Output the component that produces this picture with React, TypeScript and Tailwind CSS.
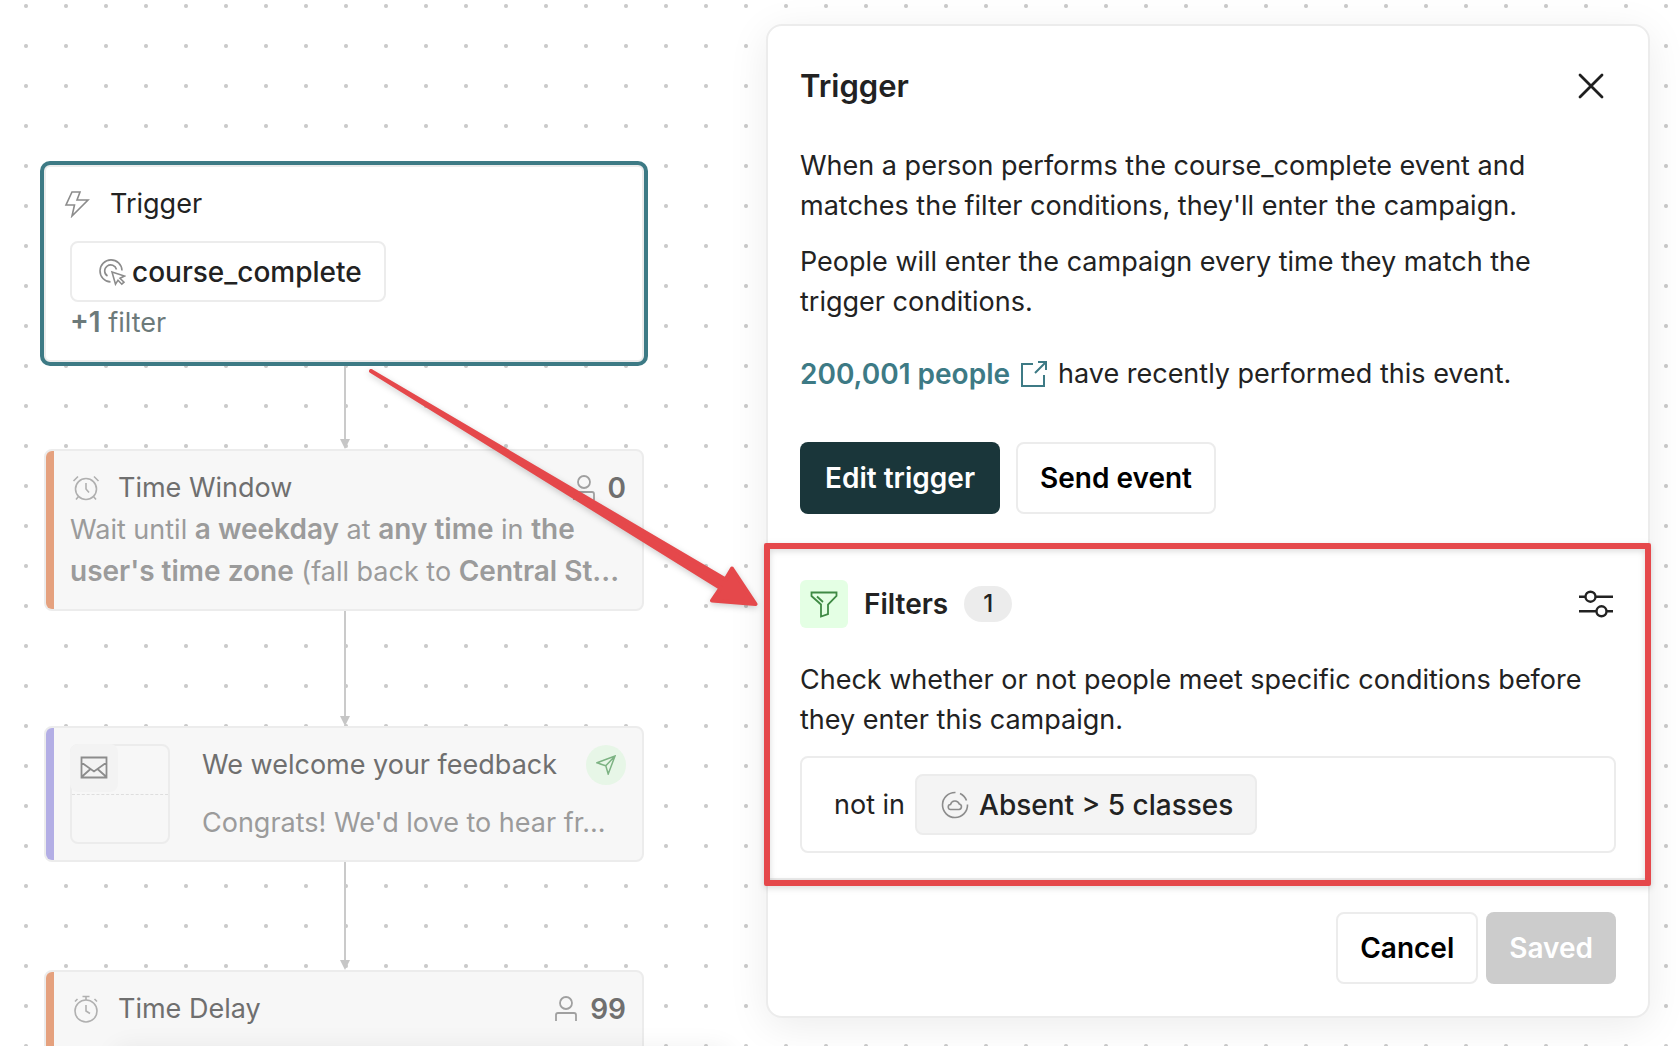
import type { ReactNode } from "react";

function BoltIcon() {
  return (
    <svg width="26" height="28" viewBox="0 0 26 28" fill="none" stroke="#8c8c8c" strokeWidth="1.6">
      <path d="M8 2h8l-3 8h11L8 26l2.500-11H2z" />
    </svg>
  );
}

function EventIcon() {
  return (
    <svg width="28" height="28" viewBox="0 0 28 28" fill="none" stroke="#8c8c8c" strokeWidth="1.6">
      <path d="M12.500 23.900A11 11 0 1 1 24 12.500" />
      <path d="M9.500 18A6 6 0 1 1 18.500 11.500" />
      <path d="M14 14l12.500 4-4.500 2.200 4 4-2.200 2-3.800-4-2.500 4z" />
    </svg>
  );
}

function AlarmIcon() {
  return (
    <svg width="28" height="28" viewBox="0 0 28 28" fill="none" stroke="#b0b0b0" strokeWidth="1.6">
      <circle cx="14" cy="15" r="10.500" />
      <path d="M14 9v6l3 3.500M1.500 7 6 2.500M22 2.500 26.500 7M6.500 22.500 4 25.500M21.500 22.500l2.500 3" />
    </svg>
  );
}

function StopwatchIcon() {
  return (
    <svg width="28" height="28" viewBox="0 0 28 28" fill="none" stroke="#b0b0b0" strokeWidth="1.6">
      <circle cx="14" cy="16" r="11" />
      <path d="M14 10v6l4 2.500M10.500 1.500h7M14 1.500V5M3 6.500 5.500 4M25 6.500 22.500 4" />
    </svg>
  );
}

function PersonIcon() {
  return (
    <svg width="24" height="26" viewBox="0 0 24 26" fill="none" stroke="#a0a0a0" strokeWidth="1.8">
      <circle cx="12" cy="7" r="6" />
      <path d="M2 25v-6a2 2 0 0 1 2-2h16a2 2 0 0 1 2 2v6" />
    </svg>
  );
}

function EnvelopeIcon() {
  return (
    <svg width="28" height="24" viewBox="0 0 28 24" fill="none" stroke="#8c8c8c" strokeWidth="1.8">
      <path d="M1.500 1.500h25v20h-25zM1.500 6.500l12.500 9 12.500-9M1.500 21l9-8M26.500 21l-9-8" />
    </svg>
  );
}

function PlaneIcon() {
  return (
    <svg width="20" height="20" viewBox="0 0 20 20" fill="none" stroke="#7db383" strokeWidth="1.5">
      <path d="M1 7.800 19 1l-6.800 18-2.400-8.200zM9.800 10.800 19 1M3.500 8.800l6.300 2" />
    </svg>
  );
}

function ExternalIcon() {
  return (
    <svg width="28" height="28" viewBox="0 0 28 28" fill="none" stroke="#3d7a85" strokeWidth="2">
      <path d="M13 4H2v22h22V15M18 2h8v8M26 2 15 13" />
    </svg>
  );
}

function FunnelIcon() {
  return (
    <svg width="28" height="28" viewBox="0 0 28 28" fill="none" stroke="#3f8a44" strokeWidth="1.8">
      <path d="M1.500 2.500h25V6L18 14.500V24l-7 2.500v-12L1.500 6zM7 6.500l6 5.500" />
    </svg>
  );
}

function SlidersIcon() {
  return (
    <svg width="34" height="28" viewBox="0 0 34 28" fill="none" stroke="#222" strokeWidth="2.4">
      <circle cx="11.500" cy="6.700" r="5" />
      <circle cx="22.500" cy="21.300" r="5" />
      <path d="M0 6.700h6.500M16.500 6.700H34M0 21.300h17.500M27.500 21.300H34" />
    </svg>
  );
}

function SegmentIcon() {
  return (
    <svg width="28" height="28" viewBox="0 0 28 28" fill="none" stroke="#8c8c8c" strokeWidth="1.6">
      <path d="M14.500 1.500A12.500 12.500 0 1 0 26.500 13.500M19 2.500a12.500 12.500 0 0 1 6.500 7" />
      <path d="M10 18.500a2.500 2.500 0 0 1-.5-5 4.600 4.600 0 0 1 8.800-.500 2.800 2.800 0 0 1-.300 5.500z" />
    </svg>
  );
}

function CloseIcon() {
  return (
    <svg width="26" height="26" viewBox="0 0 26 26" fill="none" stroke="#1f1f1f" strokeWidth="2.8" strokeLinecap="round">
      <path d="M2 2l22 22M24 2 2 24" />
    </svg>
  );
}

function Connector({ className }: { className: string }) {
  return (
    <div className={`flex flex-col items-center pl-0.5 ${className}`}>
      <div className="w-0.5 flex-1 bg-[#cacaca]" />
      <div className="border-x-[5px] border-t-[10px] border-x-transparent border-t-[#c6c6c6]" />
    </div>
  );
}

function Strong({ children }: { children: ReactNode }) {
  return <b className="text-[28px] leading-none font-semibold">{children}</b>;
}

function StepCard({ bar, className = "", children }: { bar: string; className?: string; children: ReactNode }) {
  return (
    <div className={`flex overflow-hidden rounded-lg border-2 border-[#ececec] bg-[#f7f7f7] ${className}`}>
      <div className={`w-2 shrink-0 ${bar}`} />
      <div className="min-w-0 flex-1 p-4 leading-[42px] text-[#9b9b9b]">{children}</div>
    </div>
  );
}

function StepTitle({ icon, title, count }: { icon: ReactNode; title: string; count: number }) {
  return (
    <div className="flex items-center pl-0.5 text-[#6f6f6f]">
      <span className="mr-[18px]">{icon}</span>
      <h3 className="flex-1">{title}</h3>
      <PersonIcon />
      <span className="ml-3 text-[28px] font-semibold">{count}</span>
    </div>
  );
}

function Chip({ icon, label, className }: { icon: ReactNode; label: string; className: string }) {
  return (
    <span className={`flex h-[61px] w-fit items-center rounded-lg border-2 border-[#ececec] text-[28px] font-medium ${className}`}>
      {icon}
      {label}
    </span>
  );
}

function Workflow() {
  return (
    <section className="w-[600px] shrink-0 pt-[165px]">
      <div className="rounded-md border-2 border-[#ececec] bg-white px-6 py-4 leading-[42px] ring-4 ring-[#3d7a85]">
        <div className="-ml-1.5 flex items-center gap-5">
          <BoltIcon />
          <h3>Trigger</h3>
        </div>
        <Chip icon={<EventIcon />} label="course_complete" className="mt-4 gap-1.5 bg-white pr-[22px] pl-[26px]" />
        <p className="text-[#6c7a7a]">
          <Strong>+1</Strong> filter
        </p>
      </div>

      <Connector className="mt-1 h-[83px]" />

      <StepCard bar="bg-[#e5a17e]">
        <StepTitle icon={<AlarmIcon />} title="Time Window" count={0} />
        <p className="whitespace-nowrap">
          Wait until <Strong>a weekday</Strong> at <Strong>any time</Strong> in <Strong>the</Strong>
          <br />
          <Strong>user's time zone</Strong> (fall back to <Strong>Central St...</Strong>
        </p>
      </StepCard>

      <Connector className="h-[115px]" />

      <StepCard bar="bg-[#b3aee5]">
        <div className="flex">
          <div className="mr-8 h-[100px] w-[100px] shrink-0 rounded-lg border-2 border-[#ececec]">
            <div className="h-[51px] border-b border-dashed border-[#dedede]">
              <div className="-mt-0.5 -ml-0.5 flex h-12 w-12 items-center justify-center rounded-lg bg-[#f3f3f3]">
                <EnvelopeIcon />
              </div>
            </div>
          </div>
          <div className="min-w-0 flex-1">
            <div className="flex items-center justify-between">
              <h3 className="whitespace-nowrap text-[#6f6f6f]">We welcome your feedback</h3>
              <span className="flex h-10 w-10 items-center justify-center rounded-full bg-[#e7f6e7]">
                <PlaneIcon />
              </span>
            </div>
            <p className="mt-4 whitespace-nowrap">Congrats! We'd love to hear fr...</p>
          </div>
        </div>
      </StepCard>

      <Connector className="h-[108px]" />

      <StepCard bar="bg-[#e5a17e]" className="min-h-[162px]">
        <StepTitle icon={<StopwatchIcon />} title="Time Delay" count={99} />
      </StepCard>
    </section>
  );
}

function TriggerPanel() {
  return (
    <aside className="mt-6 min-w-0 flex-1 self-start rounded-2xl border-2 border-[#ececec] bg-white leading-10 shadow-[0_8px_40px_rgba(0,0,0,0.08)]">
      <div className="px-8 pt-10 pb-8">
        <div className="flex items-center justify-between">
          <h2 className="text-[31px] font-semibold">Trigger</h2>
          <button type="button" aria-label="Close" className="mr-3">
            <CloseIcon />
          </button>
        </div>
        <p className="mt-10">
          When a person performs the course_complete event and
          <br />
          matches the filter conditions, they'll enter the campaign.
        </p>
        <p className="mt-4">
          People will enter the campaign every time they match the
          <br />
          trigger conditions.
        </p>
        <p className="mt-8 flex items-center">
          <a href="#people" className="mr-2.5 flex items-center gap-2.5 text-[28px] font-semibold text-[#3d7a85]">
            200,001 people
            <ExternalIcon />
          </a>
          have recently performed this event.
        </p>
        <div className="mt-12 flex gap-4 text-[28px]">
          <button type="button" className="h-[72px] rounded-lg bg-[#1a363a] px-[25px] font-semibold text-white">
            Edit trigger
          </button>
          <button type="button" className="h-[72px] rounded-lg border-2 border-[#ececec] px-[22px] font-semibold text-black">
            Send event
          </button>
        </div>
      </div>

      <div className="relative border-y-2 border-[#ececec] px-8 pt-8 pb-[25px]">
        <div className="flex items-center">
          <span className="flex h-12 w-12 items-center justify-center rounded-md bg-[#e4ffe4]">
            <FunnelIcon />
          </span>
          <h3 className="ml-4 text-[28px] font-semibold">Filters</h3>
          <span className="ml-4 flex h-9 w-12 items-center justify-center rounded-full bg-[#ececec] text-2xl font-medium">1</span>
          <button type="button" aria-label="Filter settings" className="mr-[3px] ml-auto">
            <SlidersIcon />
          </button>
        </div>
        <p className="mt-8">
          Check whether or not people meet specific conditions before
          <br />
          they enter this campaign.
        </p>
        <div className="mt-4 flex items-center gap-2.5 rounded-lg border-2 border-[#ececec] px-8 py-4">
          not in
          <Chip icon={<SegmentIcon />} label="Absent > 5 classes" className="gap-2.5 bg-[#f4f4f4] pr-[22px] pl-6" />
        </div>
        <div className="pointer-events-none absolute -top-[5px] -right-[3px] -bottom-2 -left-1 rounded-xs border-[6px] border-[#e5484b] drop-shadow-[0_2px_3px_rgba(0,0,0,0.15)]" />
      </div>

      <div className="flex justify-end gap-2 p-8 text-[28px]">
        <button type="button" className="h-[72px] rounded-lg border-2 border-[#ececec] px-[22px] font-semibold text-black">
          Cancel
        </button>
        <button type="button" disabled className="h-[72px] rounded-lg bg-[#cccccc] px-[23px] font-semibold text-white">
          Saved
        </button>
      </div>
    </aside>
  );
}

export default function App() {
  return (
    <main className="relative flex h-screen gap-[122px] overflow-hidden bg-white bg-[radial-gradient(circle,#cacaca_1.5px,transparent_2.5px)] bg-[size:40px_40px] bg-[position:6px_-14px] pr-[30px] pl-11 font-[Inter,sans-serif] text-[27px] text-[#222]">
      <Workflow />
      <TriggerPanel />
      <div className="pointer-events-none absolute top-full left-28 h-10 w-[620px] rounded-2xl shadow-[0_0_24px_rgba(0,0,0,0.06)]" />
      <svg
        className="pointer-events-none absolute top-[360px] left-[360px] drop-shadow-[0_2px_3px_rgba(0,0,0,0.2)]"
        width="410"
        height="256"
        viewBox="0 0 410 256"
        fill="#e5484b"
        stroke="#e5484b"
        strokeWidth="4"
        strokeLinejoin="round"
      >
        <path d="M11 11 365.500 219.500l6.500-11L395.500 244 352 240.500l8.500-12.500z" />
      </svg>
    </main>
  );
}
